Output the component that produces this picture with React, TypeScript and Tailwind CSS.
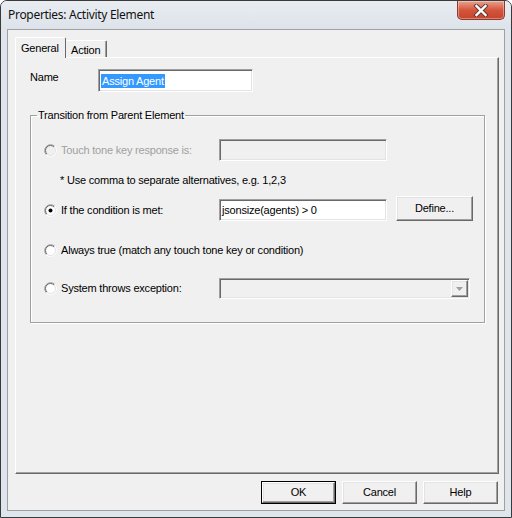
import React from "react";

const sunken =
  "border border-t-[#a0a0a0] border-l-[#a0a0a0] border-b-white border-r-white shadow-[inset_1px_1px_0_#696969,inset_-1px_-1px_0_#e3e3e3]";
const raised =
  "border border-t-white border-l-white border-r-[#696969] border-b-[#696969] shadow-[inset_-1px_-1px_0_#a0a0a0,inset_1px_1px_0_#e3e3e3] bg-[#f0f0f0]";

function Radio({ checked = false, disabled = false }: { checked?: boolean; disabled?: boolean }) {
  return (
    <svg width="13" height="13" viewBox="0 0 13 13" className="shrink-0">
      <circle cx="6.5" cy="6.5" r="5" fill={disabled ? "#f0f0f0" : "#ffffff"} />
      <path d="M2.26 10.74 A6 6 0 0 1 10.74 2.26" fill="none" stroke="#a0a0a0" strokeWidth="1" />
      <path d="M10.74 2.26 A6 6 0 0 1 2.26 10.74" fill="none" stroke="#ffffff" strokeWidth="1" />
      <path d="M2.96 10.04 A5 5 0 0 1 10.04 2.96" fill="none" stroke="#696969" strokeWidth="1" />
      <path d="M10.04 2.96 A5 5 0 0 1 2.96 10.04" fill="none" stroke="#e3e3e3" strokeWidth="1" />
      {checked && <circle cx="6.5" cy="6.5" r="2" fill="#000" />}
    </svg>
  );
}

function Option({
  label,
  checked,
  disabled,
}: {
  label: string;
  checked?: boolean;
  disabled?: boolean;
}) {
  return (
    <div className="flex items-center gap-[4px] w-[175px] shrink-0">
      <Radio checked={checked} disabled={disabled} />
      <span className={disabled ? "text-[#a0a0a0]" : "text-black"}>{label}</span>
    </div>
  );
}

export default function App() {
  return (
    <div className="w-[512px] h-[518px] flex flex-col bg-[#dfe5ec] border border-[#3a3a3a] rounded-t-[7px] overflow-hidden font-[family-name:'Liberation_Sans',Arial,sans-serif] text-[11px] leading-[13px] tracking-[-0.2px] text-black">
      {/* Title bar */}
      <div className="h-[28px] flex items-start shrink-0 bg-gradient-to-b from-[#e9edf2] to-[#dde3ea]">
        <div className="flex-1 h-full flex items-center pl-[7px] pb-[1px] font-[family-name:'Noto_Sans',sans-serif] text-[12px] tracking-[-0.3px] text-[#111]">
          Properties: Activity Element
        </div>
        <div className="mr-[6px] w-[48px] h-[19px] rounded-b-[5px] border border-t-0 border-[#8a3a2c] bg-gradient-to-b from-[#e9a08e] via-[#d5543b] to-[#c5442d] flex items-center justify-center shadow-[inset_0_0_0_1px_rgba(255,255,255,0.35)]">
          <svg width="16" height="13" viewBox="0 0 16 13">
            <path d="M3.5 2 L12.5 11 M12.5 2 L3.5 11" stroke="#5a3a34" strokeWidth="4.2" strokeLinecap="square" />
            <path d="M3.5 2 L12.5 11 M12.5 2 L3.5 11" stroke="#ffffff" strokeWidth="2.4" strokeLinecap="square" />
          </svg>
        </div>
      </div>

      {/* Client area */}
      <div className="flex-1 mx-[6px] mb-[6px] border border-[#a0a0a0] bg-[#f0f0f0] flex flex-col px-[7px] pr-[5px] pt-[7px]">
        {/* Tabs */}
        <div className="h-[20px] flex items-end shrink-0">
          <div className="relative z-10 h-[21px] -mb-px w-[51px] bg-[#f0f0f0] border-l border-t border-white border-r border-r-[#696969] rounded-t-[2px] pl-[5px] pt-[4px]">
            General
          </div>
          <div className="h-[17px] w-[41px] border-t border-white border-r border-r-[#696969] shadow-[inset_-1px_0_0_#a0a0a0] rounded-t-[2px] pl-[5px] pt-[3px]">
            Action
          </div>
        </div>

        {/* Tab panel */}
        <div className="h-[417px] shrink-0 border-l border-t border-white border-r border-b border-r-[#696969] border-b-[#696969] shadow-[inset_-1px_-1px_0_#a0a0a0] flex flex-col">
          <div className="mt-[11px] ml-[14px] flex items-start">
            <span className="w-[68px] pt-[2px]">Name</span>
            <div className={`${sunken} w-[155px] h-[23px] bg-white flex items-center pl-[2px]`}>
              <span className="bg-[#3399ff] text-white px-[1px] leading-[14px]">Assign Agent</span>
            </div>
          </div>

          <fieldset className="mt-[17px] ml-[14px] mr-[13px] border border-[#a0a0a0] shadow-[1px_1px_0_#fff,inset_1px_1px_0_#fff] pb-[23px]">
            <legend className="ml-[6px] px-[1px]">Transition from Parent Element</legend>

            <div className="mt-[17px] ml-[13px] flex items-center h-[22px]">
              <Option label="Touch tone key response is:" disabled />
              <div className={`${sunken} w-[168px] h-[22px] bg-[#f0f0f0]`} />
            </div>

            <div className="mt-[11px] ml-[29px] h-[16px] flex items-center">
              * Use comma to separate alternatives, e.g. 1,2,3
            </div>

            <div className="mt-[8px] ml-[13px] flex items-end h-[25px]">
              <div className="h-[22px] flex items-center">
                <Option label="If the condition is met:" checked />
              </div>
              <div className={`${sunken} w-[168px] h-[22px] bg-white flex items-center pl-[2px]`}>
                jsonsize(agents) &gt; 0
              </div>
              <button className={`${raised} ml-[9px] w-[77px] h-[25px] text-center`}>Define...</button>
            </div>

            <div className="mt-[21px] ml-[13px] h-[16px] flex items-center">
              <div className="flex items-center gap-[4px]">
                <Radio />
                <span>Always true (match any touch tone key or condition)</span>
              </div>
            </div>

            <div className="mt-[20px] ml-[13px] flex items-center h-[21px]">
              <Option label="System throws exception:" />
              <div className={`${sunken} w-[251px] h-[21px] bg-[#f0f0f0] flex justify-end p-[1px]`}>
                <div className={`${raised} w-[17px] h-full flex items-center justify-center`}>
                  <svg width="7" height="4" viewBox="0 0 7 4">
                    <path d="M0 0 H7 L3.5 4 Z" fill="#a0a0a0" />
                  </svg>
                </div>
              </div>
            </div>
          </fieldset>
        </div>

        {/* Buttons */}
        <div className="mt-[7px] h-[23px] flex justify-end gap-[6px] pr-[1px] shrink-0">
          <div className="w-[75px] h-[23px] border border-black">
            <button className={`${raised} w-full h-full text-center`}>OK</button>
          </div>
          <button className={`${raised} w-[75px] h-[23px] text-center`}>Cancel</button>
          <button className={`${raised} w-[75px] h-[23px] text-center`}>Help</button>
        </div>
      </div>
    </div>
  );
}
